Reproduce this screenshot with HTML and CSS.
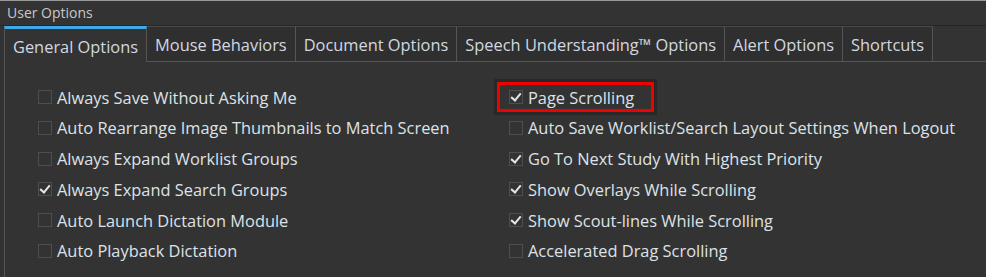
FILE: index.html
```html
<!doctype html>
<html lang="en">

<head>
  <meta charset="UTF-8" />
  <title>User Options</title>
  <link rel="stylesheet" href="styles.css">
</head>

<body>
  <div class="window">
    <div class="title-bar">User Options</div>
    <div class="tabs">
      <div class="tab active">General Options</div>
      <div class="tab">Mouse Behaviors</div>
      <div class="tab">Document Options</div>
      <div class="tab">Speech Understanding™ Options</div>
      <div class="tab">Alert Options</div>
      <div class="tab">Shortcuts</div>
      <div class="tab-fill"></div>
    </div>
    <div class="panel">
      <div class="column left">
        <label class="option"><span class="box"></span>Always Save Without Asking Me</label>
        <label class="option"><span class="box"></span>Auto Rearrange Image Thumbnails to Match Screen</label>
        <label class="option"><span class="box"></span>Always Expand Worklist Groups</label>
        <label class="option"><span class="box checked"></span>Always Expand Search Groups</label>
        <label class="option"><span class="box"></span>Auto Launch Dictation Module</label>
        <label class="option"><span class="box"></span>Auto Playback Dictation</label>
      </div>
      <div class="column right">
        <label class="option highlight"><span class="box checked"></span>Page Scrolling</label>
        <label class="option"><span class="box"></span>Auto Save Worklist/Search Layout Settings When Logout</label>
        <label class="option"><span class="box checked"></span>Go To Next Study With Highest Priority</label>
        <label class="option"><span class="box checked"></span>Show Overlays While Scrolling</label>
        <label class="option"><span class="box checked"></span>Show Scout-lines While Scrolling</label>
        <label class="option"><span class="box"></span>Accelerated Drag Scrolling</label>
      </div>
    </div>
  </div>
</body>

</html>
```

FILE: styles.css
```css
body {
  margin: 0;
  background-color: #333;
  font-family: "Open Sans", "Noto Sans", sans-serif;
  color: #dcdcdc;
}

.window {
  width: 986px;
  height: 277px;
  border-top: 1px solid #9a9a9a;
  box-sizing: border-box;
  background: #333;
}

.title-bar {
  height: 24px;
  line-height: 24px;
  padding-left: 7px;
  font-size: 14px;
  color: #c8c8c8;
  background: #333;
  border-bottom: 1px solid #262626;
}

.tabs {
  display: flex;
  padding-left: 4px;
  height: 36px;
}

.tab {
  padding: 0 8px;
  font-size: 16.4px;
  line-height: 35px;
  border: 1px solid #555;
  border-left: none;
  border-top-color: #4a4a4a;
  background: #2f2f2f;
  color: #d2d8e0;
  white-space: nowrap;
}

.tab:first-child {
  border-left: 1px solid #555;
}

.tab.active {
  border-top: 3px solid #3ba9ea;
  border-bottom: none;
  line-height: 35px;
  background: #333;
}

.tab-fill {
  flex: 1;
  border-bottom: 1px solid #555;
}

.panel {
  display: flex;
  margin-left: 4px;
  border-left: 1px solid #555;
  height: 215px;
  padding: 23px 0 0 33px;
  box-sizing: border-box;
}

.column {
  display: flex;
  flex-direction: column;
  gap: 6.8px;
}

.left {
  width: 471px;
}

.option {
  display: flex;
  align-items: center;
  height: 24px;
  font-size: 16.4px;
  white-space: nowrap;
  color: #dde2e8;
}

.box {
  width: 12px;
  height: 12px;
  border: 1px solid #4e4e4e;
  margin-right: 5px;
  position: relative;
}

.box.checked::after {
  content: "";
  position: absolute;
  left: 3px;
  top: 0;
  width: 4px;
  height: 8px;
  border: solid #e6e6e6;
  border-width: 0 2px 2px 0;
  transform: rotate(40deg);
}

.highlight {
  outline: 3px solid #f00000;
  box-shadow: 0 0 0 6px rgba(20, 20, 20, 0.35);
  margin-left: -9px;
  padding-left: 9px;
  width: 151px;
  box-sizing: border-box;
}
```
